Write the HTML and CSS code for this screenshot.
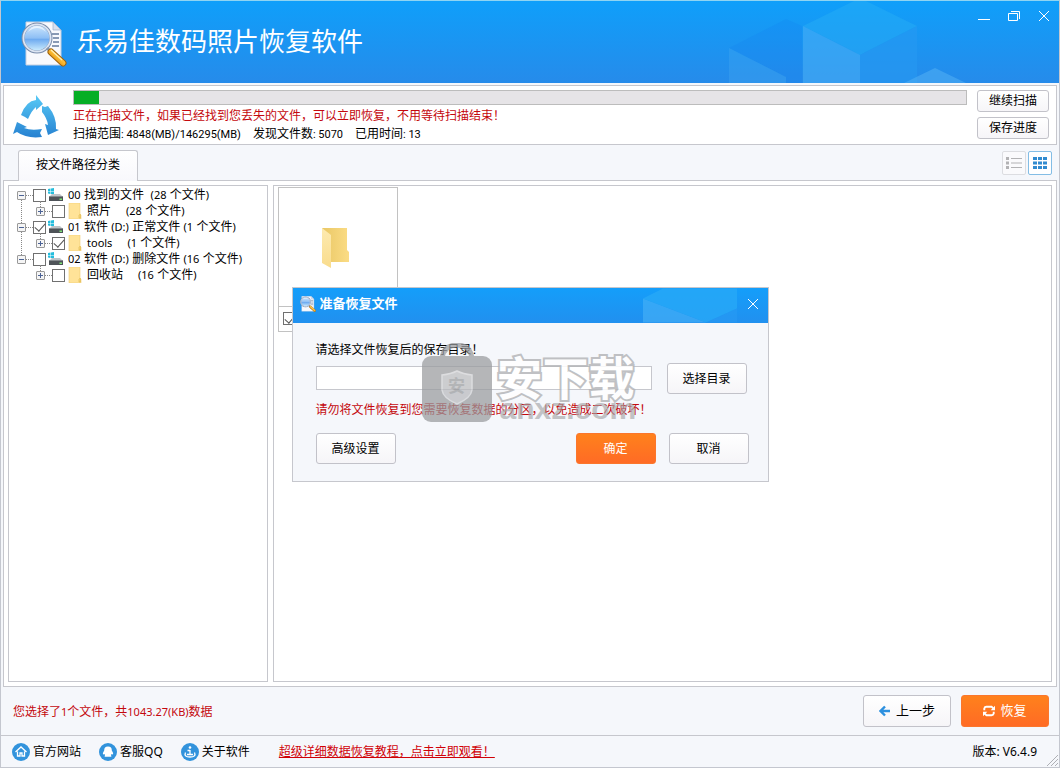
FILE: index.html
```html
<!DOCTYPE html>
<html lang="zh-CN">
<head>
<meta charset="utf-8">
<title>乐易佳数码照片恢复软件</title>
<link rel="stylesheet" href="styles.css">
</head>
<body>
<svg class="defs" aria-hidden="true">
  <defs>
    <linearGradient id="sky" x1="0" y1="0" x2="0" y2="44" gradientUnits="userSpaceOnUse"><stop offset="0" stop-color="#58caf6"/><stop offset="1" stop-color="#257fd0"/></linearGradient>
    <linearGradient id="lens" x1="0" y1="0" x2="0" y2="1"><stop offset="0" stop-color="#d3eafe"/><stop offset=".5" stop-color="#8ebff5"/><stop offset=".55" stop-color="#6fabf0"/><stop offset="1" stop-color="#d6f3ff"/></linearGradient>
    <linearGradient id="gold" x1="0" y1="1" x2="1" y2="0"><stop offset="0" stop-color="#c47b12"/><stop offset=".5" stop-color="#fbb62c"/><stop offset="1" stop-color="#ffe08a"/></linearGradient>
    <linearGradient id="fold" x1="0" y1="0" x2="1" y2="0"><stop offset="0" stop-color="#e9c765"/><stop offset="1" stop-color="#fbdc85"/></linearGradient>
    <linearGradient id="flap" x1="0" y1="0" x2="0" y2="1"><stop offset="0" stop-color="#fdeab0"/><stop offset="1" stop-color="#f9dc8d"/></linearGradient>
    <symbol id="logo" viewBox="0 0 46 46">
      <path d="M5 1h27l8 8v35H5z" fill="#f8f9fd" stroke="#c5cfe0"/>
      <path d="M32 1v8h8z" fill="#d8e1ef" stroke="#9eb0ca" stroke-width=".7"/>
      <path d="M31 13h7M32 17h6M32 21h6M31 25h7" stroke="#63799c" stroke-width="1.5"/>
      <circle cx="16" cy="17" r="14" fill="url(#lens)" stroke="#798cab" stroke-width="3"/>
      <circle cx="16" cy="17" r="13.6" fill="none" stroke="#dce5f3" stroke-width="1.8"/>
      <path d="M7 11q9-8 18 0-3-6-9-6t-9 6z" fill="#fff" opacity=".6"/>
      <path d="M26 27l4 4" stroke="#8193ad" stroke-width="3"/>
      <path d="M30 31l12 11" stroke="#a0630b" stroke-width="7" stroke-linecap="round"/>
      <path d="M30 31l12 11" stroke="url(#gold)" stroke-width="5" stroke-linecap="round"/>
      <path d="M30 29l11 10" stroke="#fff1b5" stroke-width="1.2"/>
    </symbol>
    <symbol id="drive" viewBox="0 0 16 14">
      <path d="M0 1l2.500-.4V3H0zM3 .5 6 0v3H3zM0 3.500h2.500V6L0 5.600zM3 3.500h3v3L3 6z" fill="#25bddd"/>
      <path d="M4 6h8l3 3H1z" fill="#bfc4c8"/><path d="M1 8.500h14V13H1z" fill="#4e5358"/><path d="M1 8h14v1H1z" fill="#84898d"/><path d="M11.500 10.500H14V12h-2.500z" fill="#7fe577"/>
    </symbol>
    <symbol id="folder" viewBox="0 0 15 16">
      <path d="M1 0h11v11l1 1v4H1z" fill="#ffe398" stroke="#f0cf75" stroke-width=".6"/><path d="M11.500 11.500h1V15h-1.500V12z" fill="#f7d77e" stroke="#dfb84f" stroke-width=".6"/>
    </symbol>
  </defs>
</svg>
<div class="window">
  <header class="titlebar">
    <svg class="cubes" viewBox="0 0 240 82" aria-hidden="true">
      <path d="M0 47l57-29 16 7v57H57v-6z" fill="#167fee" opacity=".2"/>
      <path d="M0 47l57 29v6H0z" fill="#45a9f2" opacity=".35"/>
      <path d="M74 25l57-28 57 28-57 29z" fill="#25adf5" opacity=".5"/>
      <path d="M74 25l57 29v28H74z" fill="#4bb0f5" opacity=".55"/>
      <path d="M131 54l57-29v57h-57z" fill="#2799f1" opacity=".6"/>
      <path d="M175 82l31-15 31 15z" fill="#4fadf4" opacity=".6"/>
    </svg>
    <svg class="app-logo" aria-hidden="true"><use href="#logo"/></svg>
    <h1>乐易佳数码照片恢复软件</h1>
    <div class="win-controls">
      <button aria-label="最小化"><svg viewBox="0 0 12 12"><path d="M0 9.500h12"/></svg></button>
      <button aria-label="还原"><svg viewBox="0 0 12 12"><path d="M.5 3.500h9v7h-9zM3 1.500h8.500V9"/></svg></button>
      <button aria-label="关闭"><svg viewBox="0 0 12 12"><path d="M1 1l10 10M11 1 1 11"/></svg></button>
    </div>
  </header>

  <section class="scan">
    <svg class="scan-icon" viewBox="0 0 46 44" aria-hidden="true">
      <g fill="url(#sky)">
        <path d="M8 20Q13 6 23 5V0l7 9-7 6v-3q-4 3-8 12l-3-2z"/>
        <path d="M29 11l3 1 3-1q9 11 8 23l3 1-11 5-3-11 3 1q-1-7-6-13z"/>
        <path d="M4 27l10 5-3 1q7 3 18 1l-2 4 2 4q-15 2-25-5l-4 2z"/>
      </g>
    </svg>
    <div class="scan-info">
      <div class="progress" role="progressbar" aria-label="扫描进度" aria-valuenow="3" aria-valuemin="0" aria-valuemax="100"><div class="progress-fill" style="width: 2.8%"></div></div>
      <p class="warn">正在扫描文件，如果已经找到您丢失的文件，可以立即恢复，不用等待扫描结束！</p>
      <p class="stats"><span>扫描范围<i>: 4848(MB)/146295(MB)</i></span><span>发现文件数<i>: 5070</i></span><span>已用时间<i>: 13</i></span></p>
    </div>
    <div class="scan-actions"><button class="btn">继续扫描</button><button class="btn">保存进度</button></div>
  </section>

  <nav class="tabs">
    <button class="tab">按文件路径分类</button>
    <div class="views">
      <button class="view" aria-label="列表"><svg viewBox="0 0 16 12"><path d="M0 0h3v3H0zM0 4.500h3v3H0zM0 9h3v3H0zM5 1h11v1H5zM5 5.500h11v1H5zM5 10h11v1H5z" fill="#b2b2b4"/></svg></button>
      <button class="view active" aria-label="缩略图"><svg viewBox="0 0 16 12"><path d="M1 0h4v3H1zM6 0h4v3H6zM11 0h4v3h-4zM1 4.500h4v3H1zM6 4.500h4v3H6zM11 4.500h4v3h-4zM1 9h4v3H1zM6 9h4v3H6zM11 9h4v3h-4z" fill="#318bd0"/></svg></button>
    </div>
  </nav>

  <main class="content">
    <aside class="pane tree">
      <ul class="roots">
        <li>
          <div class="node"><button class="toggle" aria-label="折叠"></button><input type="checkbox" id="n0"><label for="n0"><svg class="drive"><use href="#drive"/></svg><i>00</i> 找到的文件&nbsp; <i>(28</i> 个文件<i>)</i></label></div>
          <ul><li class="node"><button class="toggle plus" aria-label="展开"></button><input type="checkbox" id="n1"><label for="n1"><svg class="folder"><use href="#folder"/></svg>照片<i class="count">(28</i> 个文件<i>)</i></label></li></ul>
        </li>
        <li>
          <div class="node"><button class="toggle" aria-label="折叠"></button><input type="checkbox" id="n2" checked><label for="n2"><svg class="drive"><use href="#drive"/></svg><i>01</i> 软件 <i>(D:)</i> 正常文件 <i>(1</i> 个文件<i>)</i></label></div>
          <ul><li class="node"><button class="toggle plus" aria-label="展开"></button><input type="checkbox" id="n3" checked><label for="n3"><svg class="folder"><use href="#folder"/></svg><i>tools</i><i class="count">(1</i> 个文件<i>)</i></label></li></ul>
        </li>
        <li>
          <div class="node"><button class="toggle" aria-label="折叠"></button><input type="checkbox" id="n4"><label for="n4"><svg class="drive"><use href="#drive"/></svg><i>02</i> 软件 <i>(D:)</i> 删除文件 <i>(16</i> 个文件<i>)</i></label></div>
          <ul><li class="node"><button class="toggle plus" aria-label="展开"></button><input type="checkbox" id="n5"><label for="n5"><svg class="folder"><use href="#folder"/></svg>回收站<i class="count">(16</i> 个文件<i>)</i></label></li></ul>
        </li>
      </ul>
    </aside>
    <section class="pane files">
      <article class="thumb">
        <div class="preview"><svg viewBox="0 0 28 42" aria-hidden="true"><path d="M0 1h25v22l2 2v10H8z" fill="url(#fold)"/><path d="M0 1l9 7v33l-9-5z" fill="url(#flap)"/></svg></div>
        <div class="caption"><input type="checkbox" aria-label="选择文件夹" checked></div>
      </article>
    </section>
  </main>

  <section class="actions">
    <p class="warn">您选择了<i>1</i>个文件，共<i>1043.27(KB)</i>数据</p>
    <button class="btn large"><svg viewBox="0 0 12 12"><path d="M11 6H2M6 1.500 1.500 6 6 10.500" fill="none" stroke="#2d90df" stroke-width="2.400"/></svg>上一步</button>
    <button class="btn large primary"><svg viewBox="0 0 14 14"><path d="M1.500 6V4Q2 2 4 2h6l2 2M12.500 8v2q-.5 2-2.500 2H4l-2-2" fill="none" stroke="#fff" stroke-width="2.200"/><path d="M14 1v5H9zM0 13V8h5z" fill="#fff"/></svg>恢复</button>
  </section>

  <footer class="footer">
    <a href="#site"><svg viewBox="0 0 18 18"><circle cx="9" cy="9" r="9" fill="#3293dc"/><path d="M3.500 9 9 4l5.500 5M5.500 8.500V13H8v-3h2v3h2.500V8.500" fill="none" stroke="#fff" stroke-width="1.300"/></svg>官方网站</a>
    <a href="#qq"><svg viewBox="0 0 18 18"><circle cx="9" cy="9" r="9" fill="#3293dc"/><path d="M9 3.500q4 0 3.800 4 2 3 1 4l-1.300-.5-.5 1.200q1 1 0 1.600H6q-1-.6 0-1.600L5.500 11l-1.300.5q-1-1 1-4Q5 3.500 9 3.500z" fill="#fff"/></svg><span>客服<b>QQ</b></span></a>
    <a href="#about"><svg viewBox="0 0 18 18"><circle cx="9" cy="9" r="9" fill="#3293dc"/><circle cx="9" cy="4.500" r="1.300" fill="#fff"/><path d="M9 7v5M6.500 7.500H9M6 11.500h6M4.500 9.500q-2 4.500 4.500 4.500t4.500-4.500" fill="none" stroke="#fff" stroke-width="1.300"/></svg>关于软件</a>
    <a class="guide" href="#guide">超级详细数据恢复教程，点击立即观看！</a>
    <span class="version">版本<b>: V6.4.9</b></span>
    <svg class="grip" viewBox="0 0 12 12" aria-hidden="true"><path d="M1 12 12 1M5 12l7-7M9 12l3-3" stroke="#aeb0b5"/></svg>
  </footer>
</div>

<div class="overlay">
  <section class="dialog" role="dialog" aria-labelledby="dlg-title">
    <header class="dialog-bar">
      <svg class="dialog-cubes" viewBox="0 0 125 34" aria-hidden="true"><path d="M0 10v24h63z" fill="#4ab2f7" opacity=".6"/><path d="M0 10 20 0h74v20L63 34z" fill="#28a9f7" opacity=".75"/><path d="M63 34l31-14v14z" fill="#299cf4" opacity=".5"/></svg>
      <svg class="dialog-logo" aria-hidden="true"><use href="#logo"/></svg>
      <h2 id="dlg-title">准备恢复文件</h2>
      <button class="dialog-close" aria-label="关闭"><svg viewBox="0 0 12 12"><path d="M1 1l10 10M11 1 1 11"/></svg></button>
    </header>
    <div class="dialog-body">
      <label for="save-path">请选择文件恢复后的保存目录！</label>
      <div class="path-row"><input type="text" id="save-path"><button class="btn dlg">选择目录</button></div>
      <p class="warn">请勿将文件恢复到您需要恢复数据的分区，以免造成二次破坏！</p>
      <div class="dialog-actions"><button class="btn dlg">高级设置</button><button class="btn dlg primary">确定</button><button class="btn dlg">取消</button></div>
    </div>
    <div class="watermark">
      <div class="bag">
        <svg viewBox="0 0 70 79" aria-hidden="true"><path d="M20 15Q22 2 35 2t15 13" fill="none" stroke="#999b9e" stroke-width="5"/><rect y="13" width="70" height="66" rx="9" fill="#999b9e"/><path d="M20 32q9-1 15-4 6 3 15 4v15q-1 8-15 14-14-6-15-14z" fill="#b9babd" stroke="#d0d1d4" stroke-width="1.500"/></svg>
        <span>安</span>
      </div>
      <div class="brand"><strong>安下载</strong><em>anxz.com</em></div>
    </div>
  </section>
</div>
</body>
</html>
```
FILE: styles.css
```css
* { box-sizing: border-box; }
body { margin: 0; font: 12px/16px "Liberation Sans", "Noto Sans CJK SC", sans-serif; color: #000; }
h1, h2, p, ul { margin: 0; padding: 0; }
ul { list-style: none; }
i { font: 11px/16px "Noto Sans", "Noto Sans CJK SC", sans-serif; }
b { font: 12px/16px "Noto Sans", "Noto Sans CJK SC", sans-serif; }
button { font: inherit; color: inherit; padding: 0; border: 0; background: none; }
svg { display: block; flex: none; }
.defs { position: absolute; width: 0; height: 0; }
.warn { color: #c4080d; }

.window { display: flex; flex-direction: column; min-height: 100vh; border: 1px solid #c4c7cf; border-top-color: #8fd4f2; background: #f5f7fb; }

.titlebar { position: relative; display: flex; align-items: center; height: 82px; padding-left: 20px; gap: 10px; background: linear-gradient(#0f9ffa, #268bea); color: #fff; overflow: hidden; }
.cubes { position: absolute; right: 90px; top: 0; width: 240px; height: 82px; }
.app-logo { width: 46px; height: 46px; margin-top: 4px; }
.titlebar h1 { padding-bottom: 4px; font: 400 26px/36px "Noto Sans CJK SC", sans-serif; }
.win-controls { position: absolute; top: 9px; right: 9px; display: flex; gap: 18px; }
.win-controls svg, .dialog-close svg { width: 12px; height: 12px; fill: none; stroke: #fff; }

.scan { display: flex; margin: 2px 2px 0; padding: 3px 7px 1px 9px; border: 1px solid #c6c7cd; background: #fff; }
.scan-icon { width: 46px; height: 44px; margin: 6px 14px 0 0; }
.scan-info { flex: 1; }
.progress { height: 15px; margin: 1px 0 2px; border: 1px solid #bcbcbc; background: #e6e4e7; }
.progress-fill { height: 100%; background: #06ae25; }
.scan-info p { line-height: 18px; }
.stats { display: flex; gap: 12px; }
.stats i { font-family: "Roboto", "Noto Sans CJK SC", sans-serif; }
.scan-actions { display: flex; flex-direction: column; gap: 5px; margin: 1px 0 0 10px; }
.btn { width: 72px; height: 22px; border: 1px solid #c2c2c9; border-radius: 3px; background: linear-gradient(#fff, #f6f5f8); }

.tabs { display: flex; justify-content: space-between; height: 35px; padding: 5px 7px 0 17px; }
.tab { position: relative; height: 31px; width: 120px; padding-bottom: 2px; border: 1px solid #c6c7cd; border-bottom: 0; border-radius: 3px 3px 0 0; background: linear-gradient(#fff, #f8f8fc); }
.views { display: flex; gap: 2px; padding-top: 1px; }
.view { display: grid; place-items: center; width: 24px; height: 24px; border: 1px solid #dcdde1; border-radius: 2px; background: #fafafc; }
.view.active { border-color: #83bde5; background: #fff; }
.view svg { width: 16px; height: 12px; }

.content { flex: 1; display: flex; gap: 5px; margin: 0 2px; padding: 4px; border: 1px solid #c6c7cd; background: #fff; }
.pane { border: 1px solid #c6c7cd; background: #fff; }
.tree { width: 260px; padding: 1px 8px; }
.files { flex: 1; padding: 1px 4px; }

.roots { position: relative; }
.roots::before { content: ""; position: absolute; left: 4px; top: 8px; height: 64px; border-left: 1px dotted #888; }
.roots ul { position: relative; padding-left: 19px; }
.roots ul::before { content: ""; position: absolute; left: 23px; top: -2px; height: 6px; border-left: 1px dotted #888; }
.node { position: relative; display: flex; align-items: center; height: 16px; white-space: pre; }
.node::before { content: ""; width: 7px; margin-left: 9px; border-top: 1px dotted #888; }
.toggle { position: absolute; left: 0; top: 4px; width: 9px; height: 9px; border: 1px solid #999; border-radius: 1px; background: linear-gradient(#4b6295, #4b6295) center / 5px 1px no-repeat, #f5f5f5; }
.toggle.plus { background: linear-gradient(#4b6295, #4b6295) center / 5px 1px no-repeat, linear-gradient(#4b6295, #4b6295) center / 1px 5px no-repeat, #f5f5f5; }
input[type="checkbox"] { appearance: none; flex: none; display: grid; place-items: center; width: 13px; height: 13px; margin: 0; border: 1px solid #707070; background: #fff; }
input[type="checkbox"]:checked::after { content: ""; width: 9px; height: 5px; margin-top: -2px; border: solid #555; border-width: 0 0 1px 1px; transform: rotate(-48deg); }
.node label { display: flex; align-items: center; }
.drive { width: 16px; height: 14px; margin: 0 4px 0 2px; }
.folder { width: 15px; height: 16px; margin: 0 4px 0 3px; }
.count { margin-left: 15px; }

.thumb { width: 120px; border: 1px solid #c2c2c2; }
.preview { display: grid; place-items: center; height: 119px; padding: 2px 4px 0 0; border-bottom: 1px solid #c2c2c2; }
.preview svg { width: 28px; height: 42px; }
.caption { height: 24px; padding: 5px 4px; }

.actions { display: flex; align-items: center; gap: 10px; height: 48px; padding: 0 10px 0 12px; }
.actions .warn { flex: 1; padding-top: 2px; }
.btn.large { display: flex; align-items: center; justify-content: center; gap: 5px; width: 88px; height: 32px; font-size: 13px; }
.btn.large svg { width: 12px; height: 12px; }
.btn.primary { border-color: #fb762c; background: linear-gradient(#ff811c, #ff6b25); color: #fff; }

.footer { position: relative; display: flex; align-items: center; height: 32px; border-top: 1px solid #c6c7cd; padding: 0 22px 0 11px; gap: 18px; }
.footer a { display: flex; align-items: center; gap: 3px; color: #000; text-decoration: none; }
.footer a svg { width: 18px; height: 18px; }
.footer .guide { margin-left: 11px; color: #d00006; text-decoration: underline; }
.version { margin-left: auto; }
.grip { position: absolute; right: 1px; bottom: 1px; width: 12px; height: 12px; }

.overlay { position: fixed; inset: 0; display: grid; place-items: center; }
.dialog { position: relative; width: 477px; border: 1px solid #c6c7cd; background: #f5f7fb; }
.dialog-bar { position: relative; display: flex; align-items: center; gap: 4px; height: 35px; padding: 0 9px 3px 7px; background: linear-gradient(#149efa, #2190ef); color: #fff; }
.dialog-cubes { position: absolute; right: 0; top: 0; width: 125px; height: 35px; }
.dialog-logo { width: 16px; height: 16px; }
.dialog-bar h2 { flex: 1; font-size: 13px; line-height: 18px; }
.dialog-close { position: relative; }
.dialog-body { padding: 19px 19px 17px 23px; }
.dialog-body > label { display: block; }
.path-row { display: flex; align-items: center; gap: 15px; margin: 5px 2px 8px 0; }
.path-row input { flex: 1; min-width: 0; height: 24px; border: 1px solid #c6c7cd; background: #fff; font: inherit; }
.btn.dlg { width: 80px; height: 31px; padding-top: 1px; }
.dialog-actions { display: flex; gap: 13px; margin-top: 15px; }
.dialog-actions :first-child { margin-right: auto; }
.watermark { position: absolute; left: 129px; top: 55px; display: flex; gap: 5px; pointer-events: none; }
.bag { position: relative; width: 70px; height: 79px; opacity: .72; }
.bag span { position: absolute; inset: 34px 0 auto; text-align: center; font-size: 17px; line-height: 20px; font-weight: 700; color: #97999c; }
.brand { padding-top: 5px; }
.brand strong, .brand em { display: block; }
.brand strong { font: 700 46px/54px "Noto Sans CJK SC", sans-serif; color: #fff; -webkit-text-stroke: 4px #b6b7ba; paint-order: stroke fill; opacity: .85; }
.brand em { margin-top: -7px; padding-left: 3px; font: 700 30px/28px "Liberation Sans", sans-serif; color: #a6a6a9; opacity: .65; }
```
